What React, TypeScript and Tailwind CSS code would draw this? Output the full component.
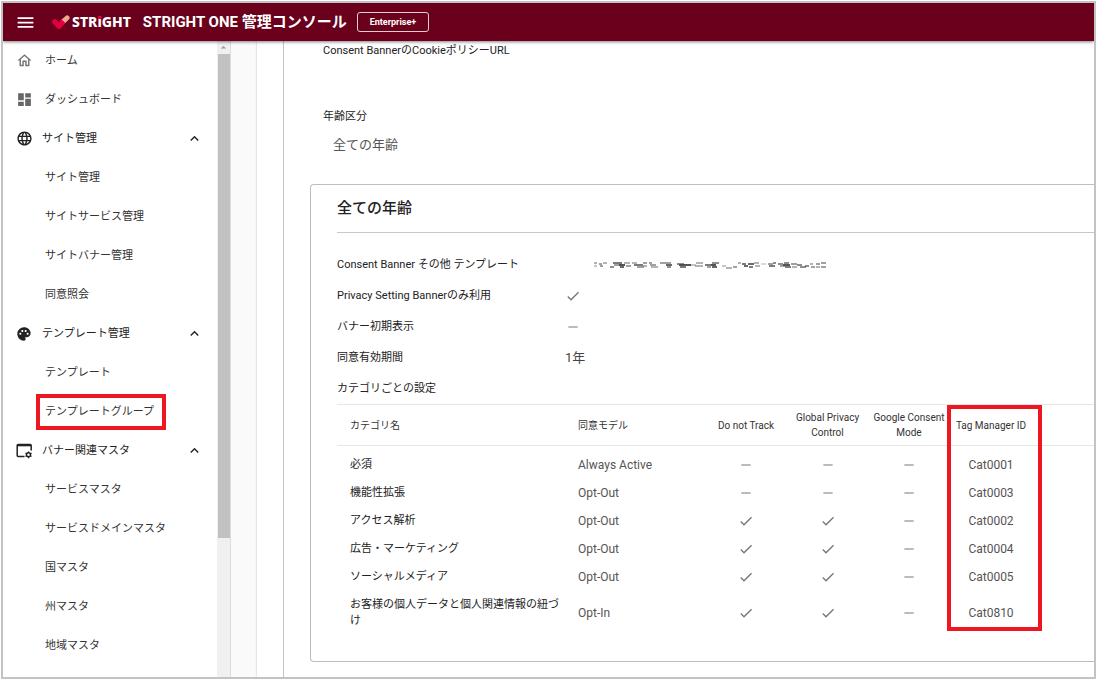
import type { ReactNode } from "react";
import {
  MdArrowDropUp,
  MdCheck,
  MdDashboard,
  MdExpandLess,
  MdLanguage,
  MdMenu,
  MdOutlineHome,
  MdPalette,
  MdRemove,
} from "react-icons/md";

type MenuGroup = {
  label: string;
  icon: ReactNode;
  items: string[];
};

type CategoryRow = {
  name: string;
  model: string;
  doNotTrack: boolean;
  gpc: boolean;
  gcm: boolean;
  tagId: string;
};

const BannerSettingsIcon = () => (
  <svg viewBox="0 0 17 16" className="h-4 w-[17px]" fill="none">
    <path
      d="M8.5 13.5H2.2a1 1 0 0 1-1-1V2.4a1 1 0 0 1 1-1h12a1 1 0 0 1 1 1v5"
      stroke="#222"
      strokeWidth="1.5"
    />
    <path d="M1.5 1h13.500v2.300H1.500z" fill="#222" />
    <circle cx="12.500" cy="11.800" r="2" stroke="#222" strokeWidth="1.500" />
    <path
      d="M12.500 8.400v1.400M12.500 13.800v1.400M9.500 10.100l1.300.8M14.200 12.700l1.300.8M9.500 13.500l1.300-.8M14.200 10.900l1.300-.8"
      stroke="#222"
      strokeWidth="1.300"
    />
  </svg>
);

const groups: MenuGroup[] = [
  {
    label: "サイト管理",
    icon: <MdLanguage size={17} />,
    items: ["サイト管理", "サイトサービス管理", "サイトバナー管理", "同意照会"],
  },
  {
    label: "テンプレート管理",
    icon: <MdPalette size={16} />,
    items: ["テンプレート", "テンプレートグループ"],
  },
  {
    label: "バナー関連マスタ",
    icon: <BannerSettingsIcon />,
    items: [
      "サービスマスタ",
      "サービスドメインマスタ",
      "国マスタ",
      "州マスタ",
      "地域マスタ",
    ],
  },
];

const categories: CategoryRow[] = [
  { name: "必須", model: "Always Active", doNotTrack: false, gpc: false, gcm: false, tagId: "Cat0001" },
  { name: "機能性拡張", model: "Opt-Out", doNotTrack: false, gpc: false, gcm: false, tagId: "Cat0003" },
  { name: "アクセス解析", model: "Opt-Out", doNotTrack: true, gpc: true, gcm: false, tagId: "Cat0002" },
  { name: "広告・マーケティング", model: "Opt-Out", doNotTrack: true, gpc: true, gcm: false, tagId: "Cat0004" },
  { name: "ソーシャルメディア", model: "Opt-Out", doNotTrack: true, gpc: true, gcm: false, tagId: "Cat0005" },
  {
    name: "お客様の個人データと個人関連情報の紐づけ",
    model: "Opt-In",
    doNotTrack: true,
    gpc: true,
    gcm: false,
    tagId: "Cat0810",
  },
];

// x, y, width, opacity of each dash in the masked template name
const maskDashes = [
  [1, 1, 2, 0.4], [1, 4, 2, 0.3], [6, 2, 2, 0.5], [7, 4, 2, 0.5], [10, 1, 3, 0.4],
  [17, 5, 3, 0.6], [20, 1, 8, 0.7], [21, 3, 6, 0.5], [26, 3, 5, 0.9], [27, 5, 3, 0.8],
  [31, 1, 5, 0.4], [33, 4, 4, 0.5], [39, 1, 4, 0.4], [41, 3, 8, 0.7], [44, 5, 6, 0.5],
  [50, 1, 3, 0.5], [50, 4, 3, 0.4], [56, 1, 2, 0.5], [57, 3, 5, 0.5], [58, 5, 6, 0.4],
  [67, 1, 10, 0.5], [73, 3, 5, 0.8], [74, 5, 3, 0.6], [84, 2, 6, 0.6], [86, 3, 11, 0.9],
  [87, 5, 5, 0.7], [97, 3, 5, 0.3], [103, 1, 6, 0.4], [102, 4, 7, 0.4], [112, 3, 5, 0.7],
  [114, 5, 3, 0.5], [118, 3, 4, 0.9], [119, 1, 6, 0.6], [119, 5, 4, 0.8],
  [129, 4, 3, 0.3], [133, 6, 5, 0.4], [140, 5, 3, 0.5], [145, 1, 2, 0.4],
  [149, 2, 3, 0.7], [151, 4, 3, 0.8], [155, 2, 5, 0.8], [156, 5, 3, 0.7], [161, 1, 4, 0.4],
  [162, 4, 4, 0.4], [168, 2, 4, 0.2], [175, 2, 4, 0.5], [176, 4, 5, 0.7], [180, 1, 2, 0.6],
  [185, 2, 4, 0.6], [187, 4, 4, 0.5], [190, 3, 6, 0.9], [191, 1, 4, 0.6], [192, 5, 5, 0.7],
  [198, 2, 5, 0.5], [199, 5, 4, 0.4], [204, 3, 4, 0.6], [207, 5, 5, 0.6], [212, 4, 3, 0.6],
  [217, 2, 2, 0.4], [218, 5, 3, 0.5], [223, 2, 3, 0.5], [223, 5, 3, 0.4], [228, 1, 4, 0.5],
  [228, 5, 4, 0.5],
];

const Flag = ({ on }: { on: boolean }) =>
  on ? (
    <MdCheck size={16} className="mx-auto block text-[#777]" aria-label="有効" />
  ) : (
    <MdRemove size={16} className="mx-auto block text-[#999]" aria-label="無効" />
  );

const Logo = () => (
  <div className="flex items-center gap-0.5 text-white">
    <svg viewBox="0 0 18 15" className="h-[15px] w-[18px]">
      <path d="M2.800 6.800 7 11.200 12 5.600" fill="none" stroke="#e4003f" strokeWidth="5.200" strokeLinecap="round" strokeLinejoin="round" />
      <path d="M11 6.800 15.200 2.800" fill="none" stroke="#f0a594" strokeWidth="4.800" strokeLinecap="round" />
      <path d="M8.500 9.500 11.500 6.300" fill="none" stroke="#e4003f" strokeWidth="5.200" />
    </svg>
    <span className="font-['Noto_Sans'] text-sm leading-5 font-extrabold">
      STR
      <span className="relative">
        i
        <span className="absolute top-[4px] left-px h-[3px] w-[3px] bg-[#e4003f]" />
      </span>
      GHT
    </span>
  </div>
);

const Header = () => (
  <header className="relative z-10 flex h-[38px] shrink-0 items-center bg-[#6a001b] pl-3 text-white shadow-[0_1px_3px_rgba(0,0,0,0.5)]">
    <button type="button" aria-label="メニュー" className="mr-4">
      <MdMenu size={21} />
    </button>
    <Logo />
    <h1 className="ml-3 text-[15px] leading-5 font-bold">
      STRIGHT ONE 管理コンソール
    </h1>
    <button
      type="button"
      className="ml-2.5 h-5 rounded-[3px] border border-[#e3cdd2] px-3 text-[9px] leading-4 font-bold"
    >
      Enterprise+
    </button>
  </header>
);

const Sidebar = () => (
  <nav className="flex w-[228px] shrink-0 border-r border-[#dcdcdc] bg-white text-[#333]">
    <div className="min-w-0 flex-1 overflow-hidden">
      <a href="#home" className="flex h-[39px] items-center pl-[13px]">
        <MdOutlineHome size={17} className="mr-3 text-[#757575]" />
        ホーム
      </a>
      <a href="#dashboard" className="flex h-[39px] items-center pl-[13px]">
        <MdDashboard size={17} className="mr-3 text-[#666]" />
        ダッシュボード
      </a>
      {groups.map((group) => (
        <div key={group.label}>
          <button
            type="button"
            aria-expanded="true"
            className="flex h-[39px] w-full items-center pr-3.5 pl-[13px] text-[#222]"
          >
            <span className="mr-[9px] w-[17px]">{group.icon}</span>
            {group.label}
            <MdExpandLess size={17} className="ml-auto" />
          </button>
          {group.items.map((item) => (
            <a key={item} href="#menu" className="flex h-[39px] items-center pl-[42px]">
              {item === "テンプレートグループ" ? (
                <span className="relative">
                  {item}
                  <span className="absolute -top-2.5 -right-3 -bottom-2.5 -left-[9px] border-4 border-[#ee1620]" />
                </span>
              ) : (
                item
              )}
            </a>
          ))}
        </div>
      ))}
    </div>
    <div className="flex w-[13px] shrink-0 flex-col bg-[#f0f0f0]">
      <MdArrowDropUp size={13} className="text-[#999]" />
      <div className="ml-px h-[484px] bg-[#c1c1c1]" />
    </div>
  </nav>
);

const SettingRow = ({ label, children }: { label: string; children?: ReactNode }) => (
  <div className="flex h-[31px] items-center">
    <dt className="w-[228px] shrink-0">{label}</dt>
    <dd className="text-[13px] text-[#444]">{children}</dd>
  </div>
);

const CategoryTable = () => (
  <div className="relative">
    <table className="w-full table-fixed">
      <colgroup>
        <col className="w-[228px]" />
        <col className="w-[140px]" />
        <col className="w-[82px]" />
        <col className="w-[81px]" />
        <col className="w-[82px]" />
        <col className="w-[82px]" />
        <col />
      </colgroup>
      <thead className="border-y border-[#e6e6e6] text-[10px] leading-[15px] text-[#333]">
        <tr>
          <th className="py-[5px] pl-[13px] text-left font-normal">カテゴリ名</th>
          <th className="py-[5px] pl-[13px] text-left font-normal">同意モデル</th>
          <th className="py-[5px] font-normal">Do not Track</th>
          <th className="py-[5px] font-normal">
            Global Privacy
            <br />
            Control
          </th>
          <th className="py-[5px] font-normal">
            Google Consent
            <br />
            Mode
          </th>
          <th className="py-[5px] font-normal">Tag Manager ID</th>
          <th />
        </tr>
      </thead>
      <tbody className="leading-4 [&>tr:first-child>td]:pt-[11px]">
        {categories.map((row) => (
          <tr key={row.tagId}>
            <td className="py-1.5 pl-[13px]">{row.name}</td>
            <td className="py-1.5 pl-[13px] text-xs leading-4 text-[#555]">{row.model}</td>
            <td className="py-1.5">
              <Flag on={row.doNotTrack} />
            </td>
            <td className="py-1.5">
              <Flag on={row.gpc} />
            </td>
            <td className="py-1.5">
              <Flag on={row.gcm} />
            </td>
            <td className="py-1.5 text-center text-xs leading-4 text-[#555]">{row.tagId}</td>
            <td />
          </tr>
        ))}
      </tbody>
    </table>
    <div className="absolute top-px left-[610px] h-[226px] w-[95px] border-4 border-[#ee1620]" />
  </div>
);

const TemplateGroup = () => (
  <main className="flex min-w-0 flex-1 bg-[#fafafa] pl-[26px]">
    <div className="flex min-w-0 flex-1 bg-white pl-[26px] shadow-[0_0_2px_rgba(0,0,0,0.25)]">
      <div className="min-w-0 flex-1 border-l border-[#c4c4c4] pl-[26px]">
        <div className="pt-0.5 pl-[13px]">
          <p>Consent BannerのCookieポリシーURL</p>
          <p className="mt-[50px]">年齢区分</p>
          <p className="mt-2.5 pl-2.5 text-[13px] leading-5 text-[#555]">全ての年齢</p>
        </div>
        <section className="mt-[29px] rounded-l border border-r-0 border-[#bdbdbd] pt-[11px] pb-[26px] pl-[26px]">
          <h2 className="border-b border-[#c8c8c8] pb-3 text-[15px] leading-6 font-medium">
            全ての年齢
          </h2>
          <dl className="mt-4">
            <SettingRow label="Consent Banner その他 テンプレート">
              <svg viewBox="0 0 236 8" className="ml-7 h-2 w-[236px]">
                {maskDashes.map(([x, y, w, opacity]) => (
                  <rect key={`${x}-${y}`} x={x} y={y} width={w + 1} height="2" fill="#444" opacity={opacity} />
                ))}
              </svg>
            </SettingRow>
            <SettingRow label="Privacy Setting Bannerのみ利用">
              <Flag on={true} />
            </SettingRow>
            <SettingRow label="バナー初期表示">
              <Flag on={false} />
            </SettingRow>
            <SettingRow label="同意有効期間">1年</SettingRow>
            <SettingRow label="カテゴリごとの設定" />
          </dl>
          <CategoryTable />
        </section>
      </div>
    </div>
  </main>
);

export default function App() {
  return (
    <div className="h-screen bg-white p-px font-['Roboto','Noto_Sans_CJK_JP',sans-serif] text-[11px] leading-4 text-[#222]">
      <div className="flex h-full flex-col overflow-hidden border-2 border-[#c3c3c3]">
        <Header />
        <div className="flex min-h-0 flex-1">
          <Sidebar />
          <TemplateGroup />
        </div>
      </div>
    </div>
  );
}
